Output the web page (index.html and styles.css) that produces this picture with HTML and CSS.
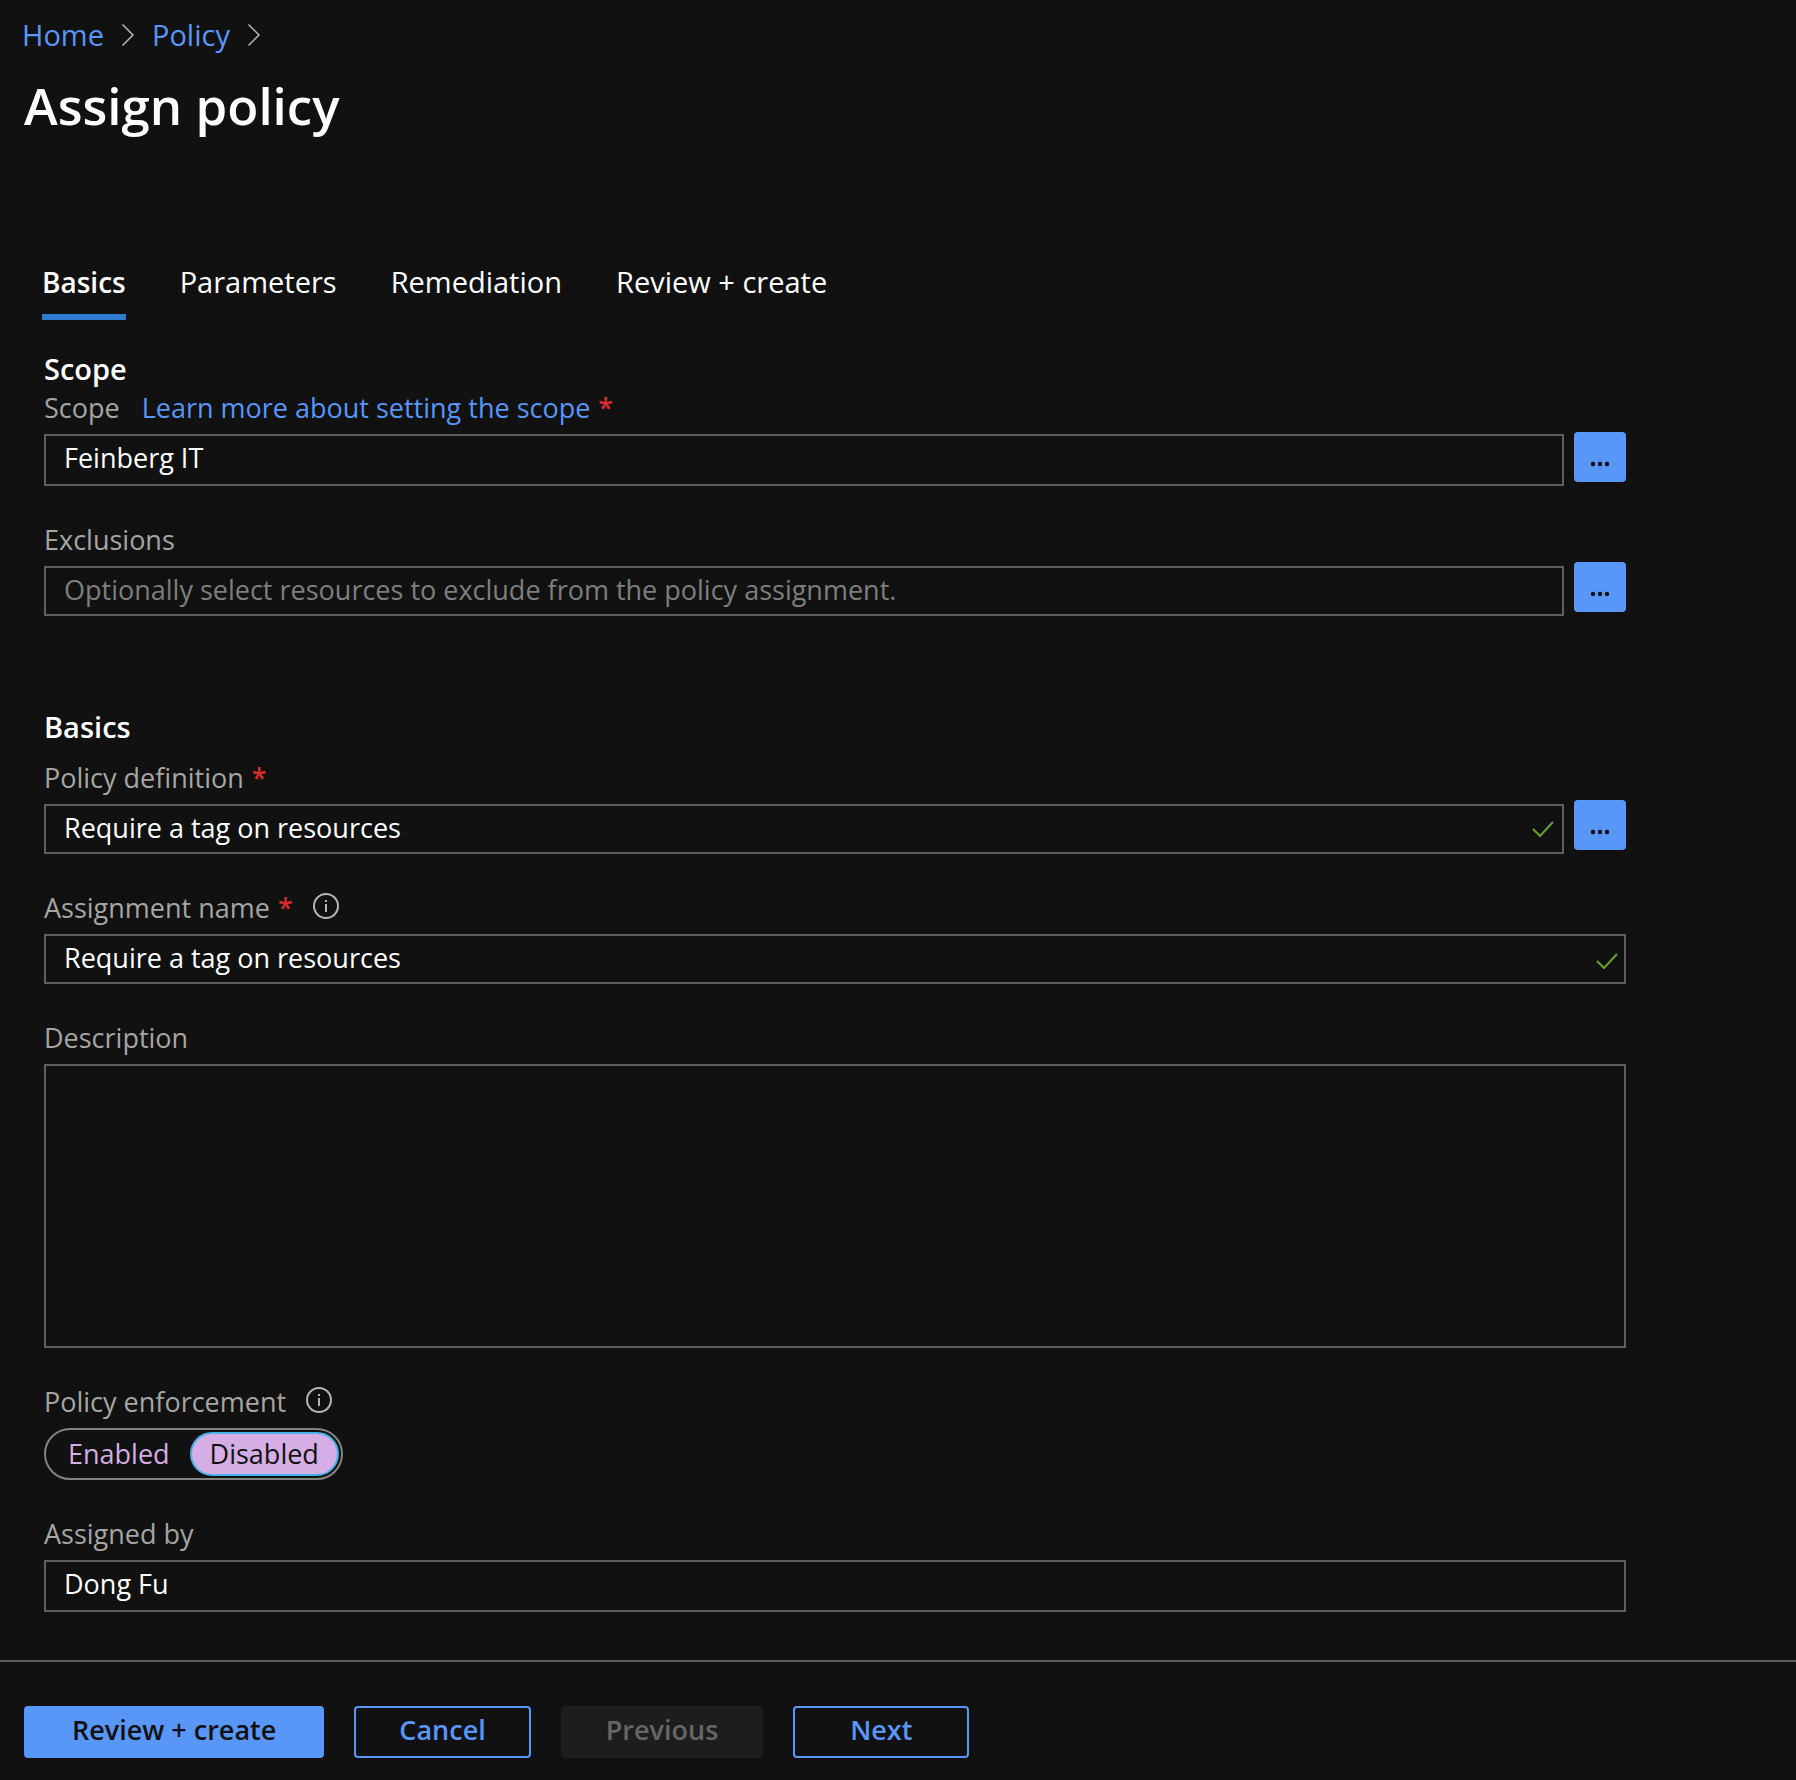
FILE: index.html
```html
<!DOCTYPE html>
<html lang="en">
<head>
<meta charset="utf-8">
<meta name="viewport" content="width=device-width, initial-scale=1">
<title>Assign policy</title>
<link rel="stylesheet" href="styles.css">
</head>
<body>
<div class="page">
  <header class="header">
    <nav class="breadcrumb" aria-label="Breadcrumb">
      <a class="link" href="#home">Home</a>
      <svg class="chevron" viewBox="0 0 14 24" aria-hidden="true"><path d="M1.5 1.5 12 12 1.5 22.5"/></svg>
      <a class="link" href="#policy">Policy</a>
      <svg class="chevron" viewBox="0 0 14 24" aria-hidden="true"><path d="M1.5 1.5 12 12 1.5 22.5"/></svg>
    </nav>
    <h1 class="title">Assign policy</h1>
  </header>

  <div class="tabs" role="tablist">
    <button class="tab tab-active" type="button" role="tab" aria-selected="true">Basics</button>
    <button class="tab" type="button" role="tab" aria-selected="false">Parameters</button>
    <button class="tab" type="button" role="tab" aria-selected="false">Remediation</button>
    <button class="tab" type="button" role="tab" aria-selected="false">Review + create</button>
  </div>

  <form class="form" id="assign-form">
    <section class="section">
      <h2 class="section-title">Scope</h2>
      <div class="field">
        <div class="label-row">
          <label for="scope">Scope</label>
          <a class="link label-link" href="#scope-help">Learn more about setting the scope</a>
          <span class="required">*</span>
        </div>
        <div class="picker-row">
          <input class="input input-tall" id="scope" type="text" value="Feinberg IT">
          <button class="picker" type="button" aria-label="Select scope"><svg class="dots" viewBox="0 0 20 6" aria-hidden="true"><circle cx="3" cy="3" r="2.2"/><circle cx="10" cy="3" r="2.2"/><circle cx="17" cy="3" r="2.2"/></svg></button>
        </div>
      </div>
      <div class="field">
        <div class="label-row"><label for="exclusions">Exclusions</label></div>
        <div class="picker-row">
          <input class="input" id="exclusions" type="text" placeholder="Optionally select resources to exclude from the policy assignment.">
          <button class="picker" type="button" aria-label="Select exclusions"><svg class="dots" viewBox="0 0 20 6" aria-hidden="true"><circle cx="3" cy="3" r="2.2"/><circle cx="10" cy="3" r="2.2"/><circle cx="17" cy="3" r="2.2"/></svg></button>
        </div>
      </div>
    </section>

    <section class="section section-basics">
      <h2 class="section-title">Basics</h2>
      <div class="field">
        <div class="label-row"><label for="definition">Policy definition</label><span class="required">*</span></div>
        <div class="picker-row">
          <div class="valid">
            <input class="input" id="definition" type="text" value="Require a tag on resources">
            <svg class="check" viewBox="0 0 22 18" aria-hidden="true"><path d="M1 9l7 7L21 2"/></svg>
          </div>
          <button class="picker" type="button" aria-label="Select policy definition"><svg class="dots" viewBox="0 0 20 6" aria-hidden="true"><circle cx="3" cy="3" r="2.2"/><circle cx="10" cy="3" r="2.2"/><circle cx="17" cy="3" r="2.2"/></svg></button>
        </div>
      </div>
      <div class="field">
        <div class="label-row">
          <label for="name">Assignment name</label><span class="required">*</span>
          <svg class="info" viewBox="0 0 26 26" aria-hidden="true"><circle cx="13" cy="13" r="12"/><path d="M13 11v8M13 7v2"/></svg>
        </div>
        <div class="valid">
          <input class="input" id="name" type="text" value="Require a tag on resources">
          <svg class="check check-edge" viewBox="0 0 22 18" aria-hidden="true"><path d="M1 9l7 7L21 2"/></svg>
        </div>
      </div>
      <div class="field">
        <div class="label-row"><label for="description">Description</label></div>
        <textarea class="input textarea" id="description"></textarea>
      </div>
      <div class="field">
        <div class="label-row">
          <span id="enforcement-label">Policy enforcement</span>
          <svg class="info" viewBox="0 0 26 26" aria-hidden="true"><circle cx="13" cy="13" r="12"/><path d="M13 11v8M13 7v2"/></svg>
        </div>
        <div class="toggle" role="radiogroup" aria-labelledby="enforcement-label">
          <label class="option"><input class="radio" type="radio" name="enforcement">Enabled</label>
          <label class="option"><input class="radio" type="radio" name="enforcement" checked>Disabled</label>
        </div>
      </div>
      <div class="field">
        <div class="label-row"><label for="assigned">Assigned by</label></div>
        <input class="input input-tall" id="assigned" type="text" value="Dong Fu">
      </div>
    </section>
  </form>

  <footer class="footer">
    <button class="button button-primary" type="submit" form="assign-form">Review + create</button>
    <button class="button" type="button">Cancel</button>
    <button class="button" type="button" disabled>Previous</button>
    <button class="button" type="button">Next</button>
  </footer>
</div>
</body>
</html>
```
FILE: styles.css
```css
:root {
  --bg: #111111;
  --blue: #5896f8;
  --line: #605e5e;
  --muted: #a5a5a5;
  --lilac: #d4aee4;
}

* {
  box-sizing: border-box;
}

body {
  margin: 0;
  background: var(--bg);
  color: #ffffff;
  font-family: "Open Sans", "Noto Sans", sans-serif;
  font-size: 27px;
  line-height: 36px;
}

button,
input,
textarea {
  font: inherit;
  color: inherit;
}

.page {
  display: flex;
  flex-direction: column;
  min-height: 100vh;
}

.header {
  padding: 15px 24px 0 22px;
}

.link {
  color: var(--blue);
  text-decoration: none;
}

.breadcrumb {
  display: flex;
  align-items: center;
  gap: 17px;
  font-size: 29px;
  line-height: 40px;
}

.chevron {
  width: 14px;
  height: 24px;
  fill: none;
  stroke: #b5b5b5;
  stroke-width: 1.5;
}

.title {
  margin: 18px 0 0 2px;
  font-size: 51px;
  font-weight: 600;
  line-height: 64px;
}

.tabs {
  display: flex;
  gap: 54px;
  padding: 125px 42px 0;
}

.tab {
  padding: 0 0 12px;
  border: 0;
  border-bottom: 6px solid transparent;
  background: none;
  font-size: 29px;
  line-height: 40px;
}

.tab-active {
  border-color: #2f7bd4;
  font-size: 28px;
  font-weight: 600;
}

.form {
  padding: 31px 170px 48px 44px;
}

.section-basics {
  margin-top: 93px;
}

.section-title {
  margin: 0;
  font-size: 29px;
  font-weight: 600;
  line-height: 36px;
}

.section-basics .section-title {
  margin-bottom: 15px;
}

.section:first-child .section-title {
  margin-bottom: 3px;
}

.field + .field {
  margin-top: 36px;
}

.label-row {
  display: flex;
  align-items: center;
  gap: 8px;
  margin-bottom: 8px;
  color: var(--muted);
}

.label-link {
  margin-left: 14px;
}

.required {
  color: #d92c2c;
  font-weight: 600;
}

.info {
  width: 26px;
  height: 26px;
  margin: 0 0 4px 12px;
  fill: none;
  stroke: #b5b5b5;
  stroke-width: 2;
}

.picker-row {
  display: flex;
  align-items: flex-end;
  gap: 10px;
}

.input {
  display: block;
  flex: 1;
  width: 100%;
  min-width: 0;
  height: 50px;
  padding: 0 18px 4px;
  border: 2px solid var(--line);
  border-radius: 0;
  background: transparent;
  outline: 0;
}

.input-tall {
  height: 52px;
  padding-bottom: 6px;
}

.input::placeholder {
  color: #7e7e7e;
  opacity: 1;
}

.textarea {
  height: 284px;
  padding: 8px 18px;
  resize: none;
}

.valid {
  position: relative;
  flex: 1;
}

.check {
  position: absolute;
  top: 16px;
  right: 10px;
  width: 22px;
  height: 18px;
  fill: none;
  stroke: #66a030;
  stroke-width: 2;
}

.check-edge {
  top: 18px;
  right: 8px;
}

.picker {
  display: flex;
  align-items: center;
  justify-content: center;
  width: 52px;
  height: 50px;
  margin: -4px 0 4px;
  padding: 13px 0 0;
  border: 0;
  border-radius: 4px;
  background: var(--blue);
}

.dots {
  width: 20px;
  height: 6px;
  fill: var(--bg);
}

.toggle {
  display: inline-flex;
  padding: 2px;
  border: 2px solid #838383;
  border-radius: 26px;
  vertical-align: top;
}

.option {
  position: relative;
  height: 44px;
  padding: 0 18px;
  border: 2px solid transparent;
  border-radius: 22px;
  color: var(--lilac);
  line-height: 40px;
}

.option:has(.radio:checked) {
  border-color: #45b2e8;
  background: var(--lilac);
  color: var(--bg);
}

.radio {
  position: absolute;
  inset: 0;
  margin: 0;
  opacity: 0;
}

.footer {
  display: flex;
  gap: 30px;
  padding: 44px 24px 22px;
  border-top: 2px solid var(--line);
}

.button {
  min-width: 176px;
  height: 52px;
  padding: 0 43px 4px;
  border: 2px solid var(--blue);
  border-radius: 4px;
  background: none;
  color: var(--blue);
  font-weight: 600;
}

.button-primary {
  padding: 0 46px 4px;
  background: var(--blue);
  color: var(--bg);
}

.button:disabled {
  border-color: #1d1d1d;
  background: #1d1d1d;
  color: #666666;
}
```
